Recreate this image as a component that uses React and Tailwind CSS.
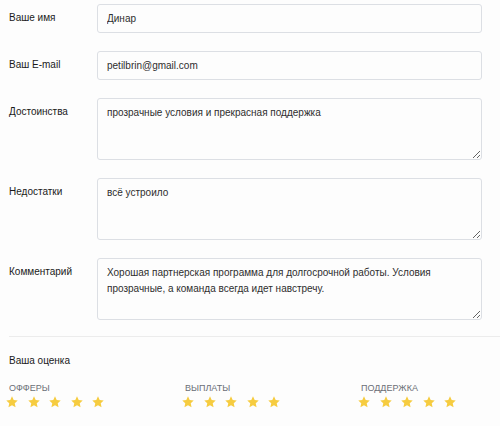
import { useState } from 'react';

const Star = () => (
  <svg width="14" height="14" viewBox="0 0 24 24" className="shrink-0">
    <path
      d="M12 2.2l2.9 6.3 6.9.8-5.1 4.7 1.4 6.8L12 17.4l-6.1 3.4 1.4-6.8-5.1-4.7 6.9-.8z"
      fill="#f6cc40"
    />
  </svg>
);

function Field({ label, children }) {
  return (
    <div className="flex items-start">
      <label className="w-[97px] shrink-0 pl-[9px] pt-[7px] text-[10px] leading-[14px] text-[#1a1a1a]">
        {label}
      </label>
      {children}
    </div>
  );
}

export default function App() {
  const [form, setForm] = useState({
    name: 'Динар',
    email: 'petilbrin@gmail.com',
    pros: 'прозрачные условия и прекрасная поддержка',
    cons: 'всё устроило',
    comment: 'Хорошая партнерская программа для долгосрочной работы. Условия прозрачные, а команда всегда идет навстречу.'
  });

  const inputCls = 'w-[385px] h-[29px] px-[9px] bg-[#fdfdfd] border border-[#dcdfe4] rounded-[3px] text-[10px] text-[#2e2e2e] outline-none';
  const areaCls = 'block w-[385px] h-[62px] px-[9px] pt-[6px] leading-[16px] bg-[#fdfdfd] border border-[#dcdfe4] rounded-[3px] text-[10px] text-[#2e2e2e] outline-none resize-y';

  return (
    <div className="w-[500px] h-[426px] overflow-hidden bg-[#fdfdfd] pt-[4px] font-['Liberation_Sans',Arial,sans-serif]">
      <div className="flex flex-col gap-[18px]">
        <Field label="Ваше имя">
          <input className={inputCls} value={form.name} onChange={(e) => setForm({ ...form, name: e.target.value })} />
        </Field>
        <Field label="Ваш E-mail">
          <input className={inputCls} value={form.email} onChange={(e) => setForm({ ...form, email: e.target.value })} />
        </Field>
        <Field label="Достоинства">
          <textarea className={areaCls} value={form.pros} onChange={(e) => setForm({ ...form, pros: e.target.value })} />
        </Field>
        <Field label="Недостатки">
          <textarea className={areaCls} value={form.cons} onChange={(e) => setForm({ ...form, cons: e.target.value })} />
        </Field>
        <Field label="Комментарий">
          <textarea className={areaCls} value={form.comment} onChange={(e) => setForm({ ...form, comment: e.target.value })} />
        </Field>
      </div>

      {/* rating */}
      <div className="ml-[9px] mt-[16px] border-t border-[#ececec] pt-[17px]">
        <p className="text-[10px] leading-[14px] text-[#1a1a1a]">Ваша оценка</p>
        <div className="mt-[14px] grid grid-cols-[176px_176px_1fr]">
          {['ОФФЕРЫ', 'ВЫПЛАТЫ', 'ПОДДЕРЖКА'].map((t) => (
            <div key={t}>
              <p className="text-[9px] leading-[12px] text-[#6b6f76]">{t}</p>
              <div className="-ml-[4px] mt-[1px] flex gap-[7.5px]">
                {[0, 1, 2, 3, 4].map((i) => <Star key={i} />)}
              </div>
            </div>
          ))}
        </div>
      </div>
    </div>
  );
}
